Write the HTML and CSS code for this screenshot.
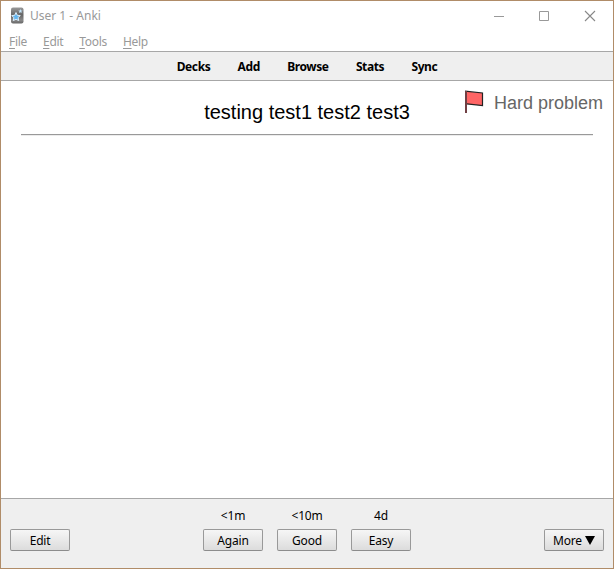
FILE: index.html
```html
<!DOCTYPE html>
<html lang="en">
<head>
<meta charset="utf-8">
<title>User 1 - Anki</title>
<link rel="stylesheet" href="styles.css">
</head>
<body>
<div class="window">
  <header class="titlebar">
    <svg class="logo" width="14" height="17" viewBox="0 0 14 17">
      <defs><linearGradient id="g" x1="0" y1="0" x2="0" y2="1"><stop offset="0" stop-color="#999"/><stop offset=".45" stop-color="#666"/><stop offset=".8" stop-color="#888"/><stop offset="1" stop-color="#666"/></linearGradient></defs>
      <rect x="1" y="0.5" width="12.500" height="16" rx="2" fill="url(#g)"/>
      <path d="M6 5.500l1.300 2.800 3 .3-2.200 2 .6 3L6 12.200l-2.700 1.400.6-3-2.200-2 3-.3z" fill="#63b5ee" stroke="#e6f5ff" stroke-width=".9"/>
      <path d="M10.500 2l.6 1.400 1.500.2-1.200 1 .3 1.500-1.200-.8-1.400.8.3-1.500-1.100-1 1.500-.2z" fill="#c5e5fa"/>
    </svg>
    <span class="title">User 1 - Anki</span>
    <svg width="104" height="12" viewBox="0 0 104 12" fill="none" stroke="#999">
      <path d="M0 6.500h10M45.500 1.500h9v9h-9z"/>
      <path d="M91 1l10 10M101 1l-10 10" stroke="#888" stroke-width="1.100"/>
    </svg>
  </header>
  <nav class="menu">
    <span><u>F</u>ile</span><span><u>E</u>dit</span><span><u>T</u>ools</span><span><u>H</u>elp</span>
  </nav>
  <nav class="toolbar">
    <a>Decks</a><a>Add</a><a>Browse</a><a>Stats</a><a>Sync</a>
  </nav>
  <main class="card">
    <div class="question">testing test1 test2 test3</div>
    <hr>
    <div class="flag">
      <svg width="20" height="24" viewBox="0 0 20 24">
        <path d="M1.500 1.500L18.500 3v12.500L1.500 14z" fill="#ff6565"/>
        <path d="M1 1.200L18.500 3v12.500L3 13.800" fill="none" stroke="#222" stroke-width="1.200"/>
        <path d="M1 1h2v22H1z" fill="#704044"/>
      </svg>
      <span>Hard problem</span>
    </div>
  </main>
  <footer class="bottom">
    <button>Edit</button>
    <div class="answers">
      <div class="answer"><span>&lt;1m</span><button>Again</button></div>
      <div class="answer"><span>&lt;10m</span><button>Good</button></div>
      <div class="answer"><span>4d</span><button>Easy</button></div>
    </div>
    <button class="more">More <svg width="10" height="9" viewBox="0 0 10 9"><path d="M0 0h10L5 9z"/></svg></button>
  </footer>
</div>
</body>
</html>
```
FILE: styles.css
```css
* { box-sizing: border-box; }
body { margin: 0; }
.window {
  width: 614px; height: 569px;
  border: 1px solid #b08c68;
  background: #fff;
  display: flex; flex-direction: column;
  font: 12px/16px "Noto Sans", "Open Sans", sans-serif;
  color: #000;
}
.titlebar { height: 29px; display: flex; align-items: center; padding: 0 15px 0 9px; color: #999; }
.logo { margin-right: 6px; }
.title { flex: 1; }
.menu { height: 21px; display: flex; gap: 16px; padding: 4px 8px 0; color: #999; letter-spacing: -0.3px; }
.menu u { text-decoration-thickness: 1px; text-underline-offset: 2px; }
.toolbar {
  height: 30px; flex: none;
  display: flex; justify-content: center; gap: 27.3px;
  line-height: 29px;
  background: #efefef;
  border-top: 1px solid #a7a7a7; border-bottom: 1px solid #a7a7a7;
  font-weight: 700; letter-spacing: -0.4px;
}
.card { position: relative; flex: 1; padding: 19px 20px 0; font-family: "Liberation Sans", Arial, sans-serif; }
.question { height: 24px; font-size: 20px; line-height: 24px; text-align: center; }
.card hr { margin: 10px 0 0; border: 0; height: 2px; background: linear-gradient(#999 50%, #ececec 50%); }
.flag { position: absolute; top: 9px; right: 10px; display: flex; align-items: flex-start; gap: 10px; color: #666; font-size: 18px; line-height: 24px; }
.flag span { padding-top: 1px; }
.bottom {
  height: 70px; flex: none;
  display: flex; justify-content: space-between; align-items: flex-end;
  padding: 0 9px 17px;
  background: #efefef; border-top: 1px solid #a7a7a7;
}
.answers { display: flex; gap: 14px; }
.answer { display: flex; flex-direction: column; align-items: center; gap: 5px; letter-spacing: -0.2px; }
button {
  width: 60px; height: 22px; padding: 2px 0 0;
  border: 1px solid #999; border-bottom-color: #8c8c8c; border-radius: 2px;
  background: linear-gradient(#f6f6f6, #dcdcdc);
  color: #000; font: inherit; letter-spacing: -0.2px;
}
.more { display: flex; align-items: center; justify-content: center; gap: 3px; }
.more svg { margin-bottom: 2px; }
```
